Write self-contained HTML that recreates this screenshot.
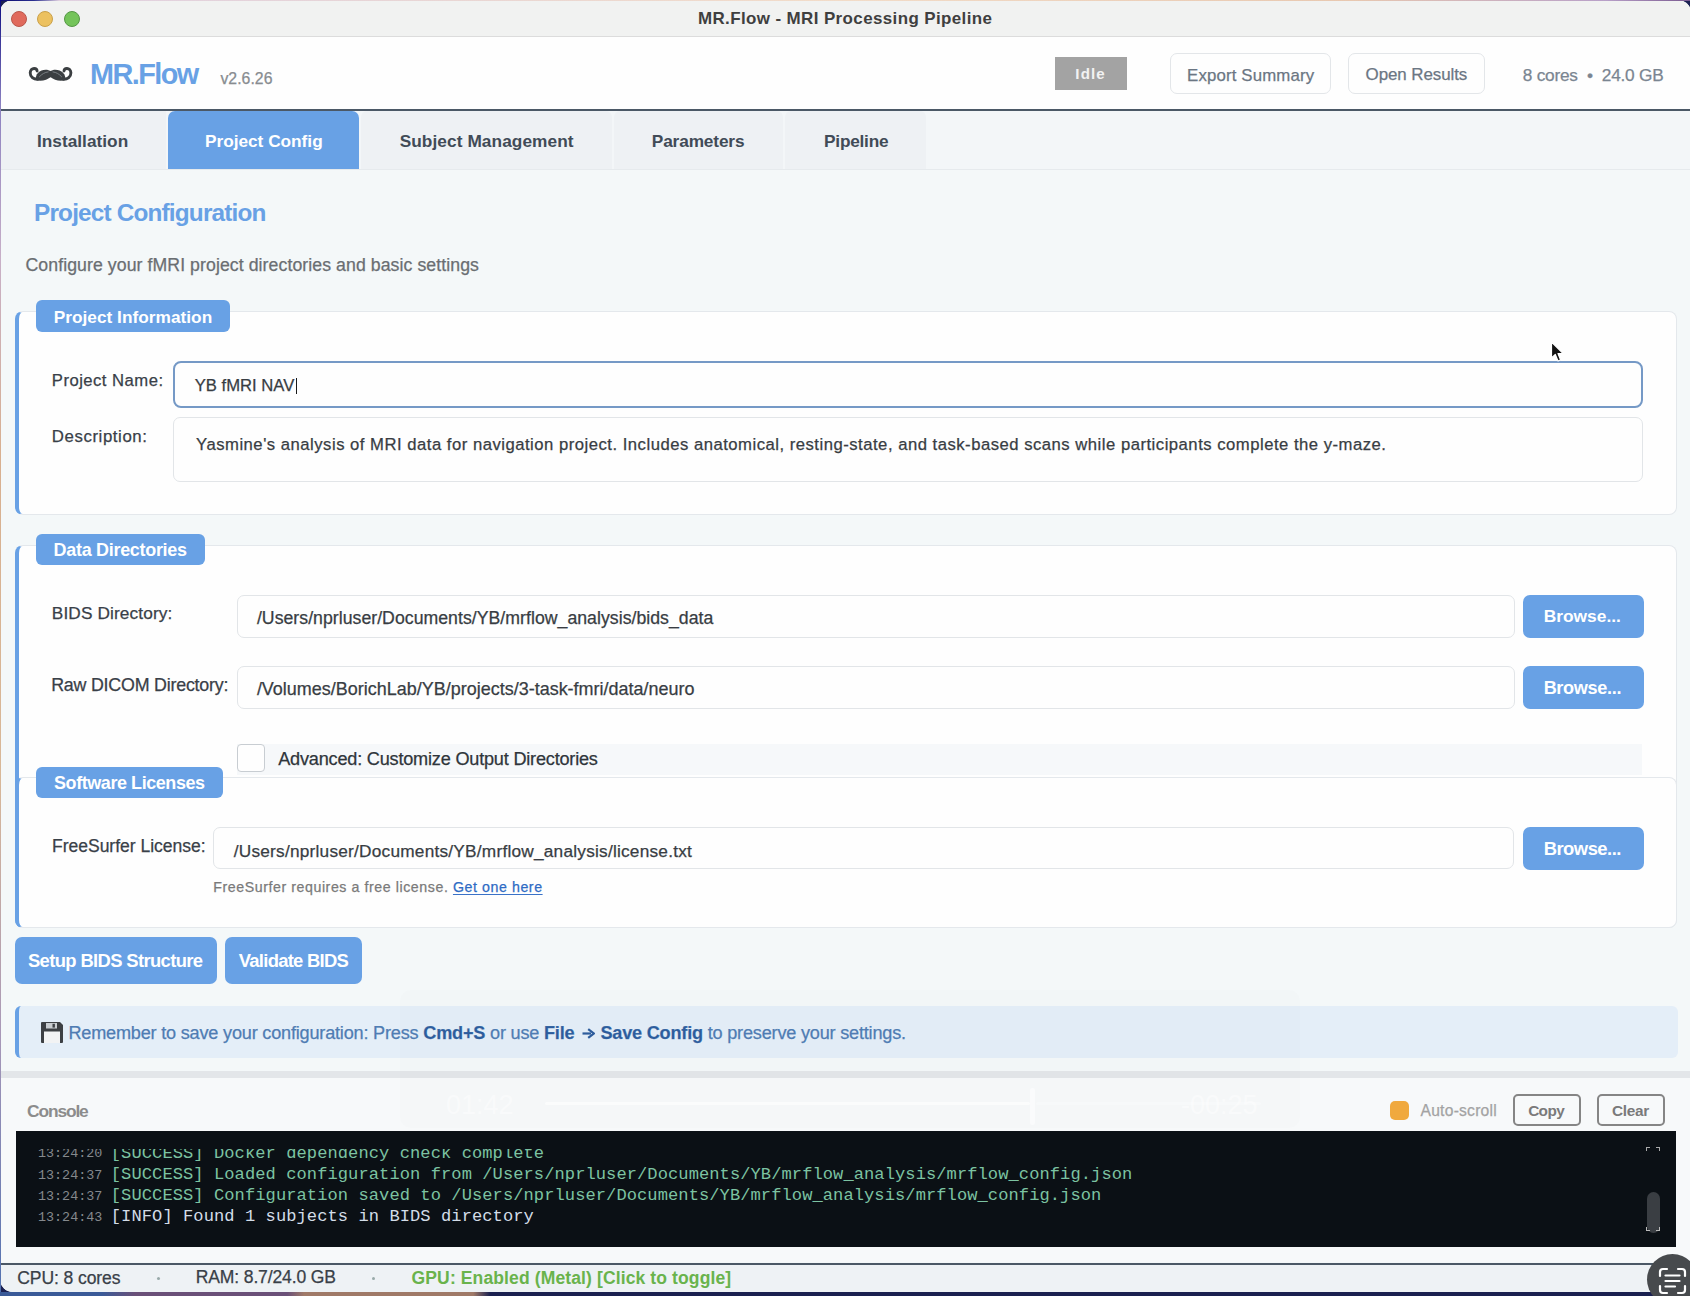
<!DOCTYPE html>
<html><head><meta charset="utf-8">
<style>
*{box-sizing:border-box;margin:0;padding:0}
html,body{width:1690px;height:1296px;overflow:hidden;background:#1b2152;font-family:"Liberation Sans",sans-serif}
.a{position:absolute}
.t{position:absolute;white-space:nowrap;line-height:1}
#win{position:absolute;left:0;top:0;width:1691px;height:1292px;background:#f4f8f9;border-radius:13px;overflow:hidden}
.sect{position:absolute;background:#fefefe;border:1px solid #e4e8ec;border-left:4px solid #68a1e5;border-radius:8px}
.badge{position:absolute;background:#68a1e5;border-radius:6px}
.inp{position:absolute;background:#fefefe;border:1.5px solid #e2e5e8;border-radius:7px}
.bb{position:absolute;background:#68a1e5;border-radius:7px}
</style></head><body>
<div id="win">
  <!-- title bar -->
  <div class="a" style="left:0;top:0;width:1700px;height:37px;background:#f1f2f1;border-bottom:1px solid #dcdcdc"></div>
  <div class="a" style="left:11px;top:10.5px;width:16px;height:16px;border-radius:50%;background:#e06a5c;border:1px solid #b9574b"></div>
  <div class="a" style="left:37.3px;top:10.5px;width:16px;height:16px;border-radius:50%;background:#ecc160;border:1px solid #c9a04a"></div>
  <div class="a" style="left:63.7px;top:10.5px;width:16px;height:16px;border-radius:50%;background:#74c45a;border:1px solid #559645"></div>

  <!-- header -->
  <div class="a" style="left:0;top:37px;width:1700px;height:72px;background:#fefefe"></div>
  <div class="a" style="left:0;top:109px;width:1700px;height:2px;background:#4b5866"></div>
  <svg class="a" style="left:24px;top:60px" width="54" height="28" viewBox="24 60 54 28">
<g transform="translate(28.5,66.9)">
 <g id="mh">
  <path fill="#3b3f42" d="M22.7 4.4 C19.8 2.5 16 2.4 13 3.6 C11 4.4 9.6 5.8 8.2 7.6 L6.6 12.9 C10 14.2 14 14.1 17.5 12.8 C19.6 12 21.2 10.9 22.7 9.8 Z"/>
  <path d="M9.5 12.3 C5 12.6 1.6 9.6 1.7 6 C1.8 3.2 3.7 1.5 5.7 1.6 C7.4 1.7 8.5 2.7 8.6 4.1" fill="none" stroke="#3b3f42" stroke-width="2.9" stroke-linecap="round"/>
  <path d="M11 9.8 C13.4 7.2 16.2 5.4 19.6 5" fill="none" stroke="#80868a" stroke-width="0.9" stroke-linecap="round"/>
 </g>
 <use href="#mh" transform="translate(44.1,0) scale(-1,1)"/>
</g>
</svg>
  <div class="a" style="left:1055px;top:57px;width:72px;height:33px;background:#a3a3a3"></div>
  <div class="a" style="left:1170px;top:53px;width:161px;height:41px;border:1px solid #e3e6e9;border-radius:7px;background:#fefefe"></div>
  <div class="a" style="left:1348px;top:53px;width:137px;height:41px;border:1px solid #e3e6e9;border-radius:7px;background:#fefefe"></div>

  <!-- tabs -->
  <div class="a" style="left:0;top:111px;width:1700px;height:58px;background:#f3f6f8"></div>
  <div class="a" style="left:0;top:169px;width:1700px;height:1px;background:#e6eaed"></div>
  <div class="a" style="left:0;top:111px;width:166px;height:58px;background:#eef1f4"></div>
  <div class="a" style="left:168px;top:111px;width:191px;height:58px;background:#68a1e5;border-radius:7px 7px 0 0"></div>
  <div class="a" style="left:361px;top:111px;width:251px;height:58px;background:#eef1f4;border-radius:6px 6px 0 0"></div>
  <div class="a" style="left:614px;top:111px;width:169px;height:58px;background:#eef1f4;border-radius:6px 6px 0 0"></div>
  <div class="a" style="left:785px;top:111px;width:141px;height:58px;background:#eef1f4;border-radius:6px 6px 0 0"></div>

  <!-- Project Information -->
  <div class="sect" style="left:15px;top:311px;width:1662px;height:204px"></div>
  <div class="badge" style="left:36px;top:300px;width:194px;height:32px"></div>
  <div class="inp" style="left:173px;top:361px;width:1470px;height:47px;border:2px solid #7599c6;border-radius:8px"></div>
  <div class="a" style="left:295.5px;top:378px;width:1.5px;height:16px;background:#1a1a1a"></div>
  <div class="inp" style="left:173px;top:417px;width:1470px;height:65px"></div>

  <!-- Data Directories (box partially hidden under licenses) -->
  <div class="sect" style="left:15px;top:545px;width:1662px;height:383px"></div>
  <div class="badge" style="left:36px;top:534px;width:169px;height:31px"></div>
  <div class="inp" style="left:237px;top:595px;width:1278px;height:43px"></div>
  <div class="bb" style="left:1523px;top:595px;width:121px;height:43px"></div>
  <div class="inp" style="left:237px;top:666px;width:1278px;height:43px"></div>
  <div class="bb" style="left:1523px;top:666px;width:121px;height:43px"></div>
  <div class="a" style="left:237px;top:744px;width:1405px;height:31px;background:#f6f8fa"></div>
  <div class="a" style="left:237px;top:744px;width:28px;height:28px;border:1.5px solid #c8cdd2;border-radius:4px;background:#fefefe"></div>

  <!-- Software Licenses -->
  <div class="sect" style="left:15px;top:777px;width:1662px;height:151px;border-top-color:#e4e8ec"></div>
  <div class="badge" style="left:36px;top:767px;width:187px;height:31px"></div>
  <div class="inp" style="left:213px;top:827px;width:1301px;height:42px"></div>
  <div class="bb" style="left:1523px;top:827px;width:121px;height:43px"></div>

  <!-- action buttons -->
  <div class="bb" style="left:15px;top:937px;width:202px;height:47px"></div>
  <div class="bb" style="left:225px;top:937px;width:137px;height:47px"></div>

  <!-- info bar -->
  <div class="a" style="left:15px;top:1006px;width:1663px;height:52px;background:#e4eef8;border-left:4px solid #68a1e5;border-radius:6px"></div>
  <svg class="a" style="left:41px;top:1022px" width="22" height="21" viewBox="0 0 22 21">
    <path d="M0 1 Q0 0 1 0 H19 L22 3 V20 Q22 21 21 21 H1 Q0 21 0 20 Z" fill="#3d4044"/>
    <rect x="5" y="1" width="11" height="5.5" fill="#c9cdd1"/>
    <rect x="11.5" y="1.8" width="2.4" height="3.8" fill="#3d4044"/>
    <rect x="3" y="9.5" width="16" height="11.5" fill="#f2f3f4"/>
  </svg>

  <!-- console area -->
  <div class="a" style="left:0;top:1071px;width:1700px;height:7px;background:#e3e6e9"></div>
  <div class="a" style="left:0;top:1078px;width:1700px;height:184px;background:#f7f9fa"></div>
  <div class="a" style="left:1390px;top:1101px;width:19px;height:19px;background:#f0a93e;border-radius:5px"></div>
  <div class="a" style="left:1513px;top:1094px;width:68px;height:32px;border:2px solid #858585;border-radius:5px"></div>
  <div class="a" style="left:1597px;top:1094px;width:68px;height:32px;border:2px solid #858585;border-radius:5px"></div>
  <div class="a" style="left:16px;top:1131px;width:1660px;height:116px;background:#0b1015;overflow:hidden">
    <div class="a" style="left:0;top:18px;width:1660px;height:98px;overflow:hidden">
      <div class="t" style="left:22px;top:-2.67px;font:13.4px 'Liberation Mono';letter-spacing:0px;color:#85898d">13:24:20</div>
<div class="t" style="left:94.8px;top:-5.49px;font:17.08px 'Liberation Mono';letter-spacing:0.07px;color:#7cc3a2">[SUCCESS] Docker dependency check complete</div>
<div class="t" style="left:22px;top:18.63px;font:13.4px 'Liberation Mono';letter-spacing:0px;color:#85898d">13:24:37</div>
<div class="t" style="left:94.8px;top:15.81px;font:17.08px 'Liberation Mono';letter-spacing:0.07px;color:#7cc3a2">[SUCCESS] Loaded configuration from /Users/nprluser/Documents/YB/mrflow_analysis/mrflow_config.json</div>
<div class="t" style="left:22px;top:39.93px;font:13.4px 'Liberation Mono';letter-spacing:0px;color:#85898d">13:24:37</div>
<div class="t" style="left:94.8px;top:37.11px;font:17.08px 'Liberation Mono';letter-spacing:0.07px;color:#7cc3a2">[SUCCESS] Configuration saved to /Users/nprluser/Documents/YB/mrflow_analysis/mrflow_config.json</div>
<div class="t" style="left:22px;top:61.23px;font:13.4px 'Liberation Mono';letter-spacing:0px;color:#85898d">13:24:43</div>
<div class="t" style="left:94.8px;top:58.41px;font:17.08px 'Liberation Mono';letter-spacing:0.07px;color:#d3dde8">[INFO] Found 1 subjects in BIDS directory</div>
    </div>
    <div class="a" style="left:1630px;top:16px;width:4px;height:4px;border-top:1.5px solid #aaa;border-left:1.5px solid #aaa"></div><div class="a" style="left:1640px;top:16px;width:4px;height:4px;border-top:1.5px solid #aaa;border-right:1.5px solid #aaa"></div>
    <div class="a" style="left:1631px;top:61px;width:13px;height:41px;background:#3a3e43;border-radius:7px"></div><div class="a" style="left:1630px;top:96px;width:4px;height:4px;border-bottom:1.5px solid #bbb;border-left:1.5px solid #bbb"></div><div class="a" style="left:1640px;top:96px;width:4px;height:4px;border-bottom:1.5px solid #bbb;border-right:1.5px solid #bbb"></div>
  </div>

  <!-- status bar -->
  <div class="a" style="left:0;top:1263px;width:1700px;height:2px;background:#4b5866"></div>
  <div class="a" style="left:0;top:1265px;width:1700px;height:30px;background:#eef2f5"></div>
  <div class="a" style="left:157px;top:1277px;width:3px;height:3px;border-radius:50%;background:#9aa"></div>
  <div class="a" style="left:372px;top:1277px;width:3px;height:3px;border-radius:50%;background:#9aa"></div>

<!-- faint video overlay -->
<div class="a" style="left:400px;top:990px;width:900px;height:138px;border-radius:10px;background:rgba(0,0,0,0.009)"></div>
<div class="t" style="left:446px;top:1092px;font-size:27px;color:rgba(255,255,255,0.45)">01:42</div>
<div class="t" style="left:1181px;top:1092px;font-size:27px;color:rgba(255,255,255,0.45)">-00:25</div>
<div class="a" style="left:545px;top:1102px;width:485px;height:3px;border-radius:2px;background:rgba(255,255,255,0.6)"></div>
<div class="a" style="left:1036px;top:1102px;width:225px;height:3px;border-radius:2px;background:rgba(255,255,255,0.25)"></div>
<div class="a" style="left:1030px;top:1088px;width:5px;height:37px;border-radius:2px;background:rgba(255,255,255,0.5)"></div>
<div id="title" class="t" style="left:697.98px;top:10.73px;font-size:16.96px;letter-spacing:0.394px;font-weight:bold;color:#3f3f3f;font-family:'Liberation Sans',sans-serif;-webkit-text-stroke:0.0px #3f3f3f">MR.Flow - MRI Processing Pipeline</div>
<div id="mrflow" class="t" style="left:89.99px;top:60.11px;font-size:28.84px;letter-spacing:-1.560px;font-weight:bold;color:#68a1e5;font-family:'Liberation Sans',sans-serif;-webkit-text-stroke:0.0px #68a1e5">MR.Flow</div>
<div id="ver" class="t" style="left:220.45px;top:70.91px;font-size:15.80px;letter-spacing:0.028px;font-weight:normal;color:#888c90;font-family:'Liberation Sans',sans-serif;-webkit-text-stroke:0.25px #888c90">v2.6.26</div>
<div id="idle" class="t" style="left:1075.32px;top:65.96px;font-size:15.07px;letter-spacing:1.140px;font-weight:bold;color:#f2f2f2;font-family:'Liberation Sans',sans-serif;-webkit-text-stroke:0.0px #f2f2f2">Idle</div>
<div id="export" class="t" style="left:1187.05px;top:67.87px;font-size:16.81px;letter-spacing:0.152px;font-weight:normal;color:#6b7683;font-family:'Liberation Sans',sans-serif;-webkit-text-stroke:0.25px #6b7683">Export Summary</div>
<div id="open" class="t" style="left:1365.60px;top:67.21px;font-size:16.96px;letter-spacing:-0.082px;font-weight:normal;color:#6b7683;font-family:'Liberation Sans',sans-serif;-webkit-text-stroke:0.25px #6b7683">Open Results</div>
<div id="cores" class="t" style="left:1522.81px;top:66.68px;font-size:17.25px;letter-spacing:-0.230px;font-weight:normal;color:#7a8591;font-family:'Liberation Sans',sans-serif;-webkit-text-stroke:0.25px #7a8591">8 cores &nbsp;•&nbsp; 24.0 GB</div>
<div id="tab1" class="t" style="left:36.97px;top:132.70px;font-size:17.25px;letter-spacing:0.014px;font-weight:bold;color:#414b57;font-family:'Liberation Sans',sans-serif;-webkit-text-stroke:0.0px #414b57">Installation</div>
<div id="tab2" class="t" style="left:204.97px;top:132.70px;font-size:17.25px;letter-spacing:-0.014px;font-weight:bold;color:#ffffff;font-family:'Liberation Sans',sans-serif;-webkit-text-stroke:0.0px #ffffff">Project Config</div>
<div id="tab3" class="t" style="left:399.65px;top:132.70px;font-size:17.25px;letter-spacing:0.082px;font-weight:bold;color:#414b57;font-family:'Liberation Sans',sans-serif;-webkit-text-stroke:0.0px #414b57">Subject Management</div>
<div id="tab4" class="t" style="left:651.79px;top:132.70px;font-size:17.25px;letter-spacing:-0.140px;font-weight:bold;color:#414b57;font-family:'Liberation Sans',sans-serif;-webkit-text-stroke:0.0px #414b57">Parameters</div>
<div id="tab5" class="t" style="left:824.05px;top:132.70px;font-size:17.25px;letter-spacing:-0.232px;font-weight:bold;color:#414b57;font-family:'Liberation Sans',sans-serif;-webkit-text-stroke:0.0px #414b57">Pipeline</div>
<div id="heading" class="t" style="left:34.04px;top:200.67px;font-size:24.35px;letter-spacing:-0.825px;font-weight:bold;color:#68a1e5;font-family:'Liberation Sans',sans-serif;-webkit-text-stroke:0.0px #68a1e5">Project Configuration</div>
<div id="subtitle" class="t" style="left:25.50px;top:257.26px;font-size:17.68px;letter-spacing:0.079px;font-weight:normal;color:#6a6e72;font-family:'Liberation Sans',sans-serif;-webkit-text-stroke:0.25px #6a6e72">Configure your fMRI project directories and basic settings</div>
<div id="b_pi" class="t" style="left:53.69px;top:308.70px;font-size:17.25px;letter-spacing:0.020px;font-weight:bold;color:#ffffff;font-family:'Liberation Sans',sans-serif;-webkit-text-stroke:0.0px #ffffff">Project Information</div>
<div id="l_pn" class="t" style="left:51.82px;top:372.71px;font-size:16.67px;letter-spacing:0.474px;font-weight:normal;color:#394048;font-family:'Liberation Sans',sans-serif;-webkit-text-stroke:0.25px #394048">Project Name:</div>
<div id="v_pn" class="t" style="left:194.70px;top:377.69px;font-size:16.67px;letter-spacing:0.000px;font-weight:normal;color:#383d43;font-family:'Liberation Sans',sans-serif;-webkit-text-stroke:0.25px #383d43">YB fMRI NAV</div>
<div id="l_desc" class="t" style="left:51.81px;top:428.59px;font-size:16.81px;letter-spacing:0.587px;font-weight:normal;color:#394048;font-family:'Liberation Sans',sans-serif;-webkit-text-stroke:0.25px #394048">Description:</div>
<div id="v_desc" class="t" style="left:196.07px;top:437.19px;font-size:16.67px;letter-spacing:0.501px;font-weight:normal;color:#383d43;font-family:'Liberation Sans',sans-serif;-webkit-text-stroke:0.25px #383d43">Yasmine's analysis of MRI data for navigation project. Includes anatomical, resting-state, and task-based scans while participants complete the y-maze.</div>
<div id="b_dd" class="t" style="left:53.60px;top:542.20px;font-size:17.97px;letter-spacing:-0.288px;font-weight:bold;color:#ffffff;font-family:'Liberation Sans',sans-serif;-webkit-text-stroke:0.0px #ffffff">Data Directories</div>
<div id="l_bids" class="t" style="left:51.79px;top:604.88px;font-size:17.25px;letter-spacing:0.119px;font-weight:normal;color:#394048;font-family:'Liberation Sans',sans-serif;-webkit-text-stroke:0.25px #394048">BIDS Directory:</div>
<div id="v_bids" class="t" style="left:256.90px;top:609.85px;font-size:17.68px;letter-spacing:0.032px;font-weight:normal;color:#383d43;font-family:'Liberation Sans',sans-serif;-webkit-text-stroke:0.25px #383d43">/Users/nprluser/Documents/YB/mrflow_analysis/bids_data</div>
<div id="br1" class="t" style="left:1543.68px;top:608.08px;font-size:17.39px;letter-spacing:-0.001px;font-weight:bold;color:#ffffff;font-family:'Liberation Sans',sans-serif;-webkit-text-stroke:0.0px #ffffff">Browse...</div>
<div id="l_raw" class="t" style="left:51.15px;top:677.49px;font-size:17.83px;letter-spacing:-0.209px;font-weight:normal;color:#394048;font-family:'Liberation Sans',sans-serif;-webkit-text-stroke:0.25px #394048">Raw DICOM Directory:</div>
<div id="v_raw" class="t" style="left:256.88px;top:680.61px;font-size:17.97px;letter-spacing:0.011px;font-weight:normal;color:#383d43;font-family:'Liberation Sans',sans-serif;-webkit-text-stroke:0.25px #383d43">/Volumes/BorichLab/YB/projects/3-task-fmri/data/neuro</div>
<div id="br2" class="t" style="left:1543.63px;top:679.20px;font-size:18.12px;letter-spacing:-0.338px;font-weight:bold;color:#ffffff;font-family:'Liberation Sans',sans-serif;-webkit-text-stroke:0.0px #ffffff">Browse...</div>
<div id="adv" class="t" style="left:278.21px;top:750.16px;font-size:18.12px;letter-spacing:-0.200px;font-weight:normal;color:#2f353b;font-family:'Liberation Sans',sans-serif;-webkit-text-stroke:0.25px #2f353b">Advanced: Customize Output Directories</div>
<div id="b_sl" class="t" style="left:54.05px;top:774.95px;font-size:17.97px;letter-spacing:-0.419px;font-weight:bold;color:#ffffff;font-family:'Liberation Sans',sans-serif;-webkit-text-stroke:0.0px #ffffff">Software Licenses</div>
<div id="l_fs" class="t" style="left:52.01px;top:837.94px;font-size:17.54px;letter-spacing:-0.020px;font-weight:normal;color:#394048;font-family:'Liberation Sans',sans-serif;-webkit-text-stroke:0.25px #394048">FreeSurfer License:</div>
<div id="v_fs" class="t" style="left:233.71px;top:842.68px;font-size:17.25px;letter-spacing:0.225px;font-weight:normal;color:#383d43;font-family:'Liberation Sans',sans-serif;-webkit-text-stroke:0.25px #383d43">/Users/nprluser/Documents/YB/mrflow_analysis/license.txt</div>
<div id="br3" class="t" style="left:1543.68px;top:840.48px;font-size:18.41px;letter-spacing:-0.513px;font-weight:bold;color:#ffffff;font-family:'Liberation Sans',sans-serif;-webkit-text-stroke:0.0px #ffffff">Browse...</div>
<div id="help" class="t" style="left:213.21px;top:879.96px;font-size:14.20px;letter-spacing:0.570px;font-weight:normal;color:#7a7a7a;font-family:'Liberation Sans',sans-serif;-webkit-text-stroke:0.25px #7a7a7a">FreeSurfer requires a free license. <span style="color:#2f6bc4;-webkit-text-stroke:0.25px #2f6bc4;text-decoration:underline;text-decoration-color:#3a72c8;text-underline-offset:2px">Get one here</span></div>
<div id="setup" class="t" style="left:27.96px;top:952.20px;font-size:18.41px;letter-spacing:-0.636px;font-weight:bold;color:#ffffff;font-family:'Liberation Sans',sans-serif;-webkit-text-stroke:0.0px #ffffff">Setup BIDS Structure</div>
<div id="validate" class="t" style="left:238.80px;top:952.20px;font-size:18.41px;letter-spacing:-0.720px;font-weight:bold;color:#ffffff;font-family:'Liberation Sans',sans-serif;-webkit-text-stroke:0.0px #ffffff">Validate BIDS</div>
<div id="info" class="t" style="left:68.41px;top:1023.66px;font-size:18.12px;letter-spacing:-0.198px;font-weight:normal;color:#4f7cb3;font-family:'Liberation Sans',sans-serif;-webkit-text-stroke:0.25px #4f7cb3">Remember to save your configuration: Press <b style="color:#2d5c9c">Cmd+S</b> or use <b style="color:#2d5c9c">File<svg width="13" height="11" viewBox="0 0 13 11" style="margin:0 5.5px 0 7.5px;vertical-align:0px"><path d="M0.5 5.5 H9" stroke="#2d5c9c" stroke-width="2.2"/><path d="M6.2 1.2 L11.8 5.5 L6.2 9.8" fill="none" stroke="#2d5c9c" stroke-width="2.2" stroke-linejoin="miter"/></svg>Save Config</b> to preserve your settings.</div>
<div id="console" class="t" style="left:27.08px;top:1102.84px;font-size:17.39px;letter-spacing:-1.140px;font-weight:bold;color:#8c8c8c;font-family:'Liberation Sans',sans-serif;-webkit-text-stroke:0.0px #8c8c8c">Console</div>
<div id="autoscroll" class="t" style="left:1420.52px;top:1102.79px;font-size:15.65px;letter-spacing:0.234px;font-weight:normal;color:#a3a3a3;font-family:'Liberation Sans',sans-serif;-webkit-text-stroke:0.25px #a3a3a3">Auto-scroll</div>
<div id="copy" class="t" style="left:1528.14px;top:1102.76px;font-size:15.36px;letter-spacing:-0.600px;font-weight:bold;color:#7a7a7a;font-family:'Liberation Sans',sans-serif;-webkit-text-stroke:0.0px #7a7a7a">Copy</div>
<div id="clear" class="t" style="left:1611.98px;top:1102.76px;font-size:15.36px;letter-spacing:-0.321px;font-weight:bold;color:#7a7a7a;font-family:'Liberation Sans',sans-serif;-webkit-text-stroke:0.0px #7a7a7a">Clear</div>
<div id="cpu" class="t" style="left:17.29px;top:1270.19px;font-size:17.54px;letter-spacing:-0.096px;font-weight:normal;color:#394048;font-family:'Liberation Sans',sans-serif;-webkit-text-stroke:0.25px #394048">CPU: 8 cores</div>
<div id="ram" class="t" style="left:195.73px;top:1269.39px;font-size:17.54px;letter-spacing:-0.132px;font-weight:normal;color:#394048;font-family:'Liberation Sans',sans-serif;-webkit-text-stroke:0.25px #394048">RAM: 8.7/24.0 GB</div>
<div id="gpu" class="t" style="left:411.57px;top:1270.19px;font-size:17.54px;letter-spacing:0.109px;font-weight:bold;color:#69b34c;font-family:'Liberation Sans',sans-serif;-webkit-text-stroke:0.0px #69b34c">GPU: Enabled (Metal) [Click to toggle]</div>
</div>
<!-- desktop background strips -->
<div class="a" style="left:0;top:0;width:1690px;height:1px;background:linear-gradient(90deg,#0a0a70 0%,#2a3090 2%,#e0d0e0 3.5%,#f2dcc8 50%,#e8c8b0 80%,#b8a0c8 95%,#7a5a90 100%)"></div>
<div class="a" style="left:0;top:0;width:1px;height:1296px;background:linear-gradient(180deg,#0a0a80 0%,#8a80c0 8%,#c8b0c8 20%,#d8b090 35%,#d8b898 60%,#a898b8 80%,#5070b0 100%)"></div>
<div class="a" style="left:0;top:1292px;width:1690px;height:4px;background:linear-gradient(90deg,#3a5a98 0%,#3a5a98 6%,#6a5078 8%,#6a5078 17%,#a07a68 18%,#a07a68 28%,#1a2050 29%,#1a2050 100%)"></div>


<!-- floating screenshot button -->
<div class="a" style="left:1647.4px;top:1254.3px;width:51px;height:51px;border-radius:50%;background:#474a4d"></div>
<svg class="a" style="left:1658px;top:1267px" width="30" height="29" viewBox="0 0 30 29">
  <g fill="none" stroke="#fff" stroke-width="2.2" stroke-linecap="round">
    <path d="M2 9 V5 Q2 2 5 2 H9"/><path d="M20 2 H24 Q27 2 27 5 V9"/>
    <path d="M2 19 V23 Q2 26 5 26 H9"/><path d="M20 26 H24 Q27 26 27 23 V19"/>
    <path d="M7.5 8.5 H21.5"/><path d="M7.5 14 H21.5"/><path d="M7.5 19.5 H17"/>
  </g>
</svg>
<!-- mouse cursor -->
<svg class="a" style="left:1550px;top:341px" width="16" height="22" viewBox="0 0 16 22">
  <path d="M1.5 1 L1.5 17 L5.3 13.4 L8 20 L10.6 18.9 L8 12.5 L13.2 12.5 Z" fill="#111" stroke="#fff" stroke-width="1.2" stroke-linejoin="round"/>
</svg>
</body></html>
